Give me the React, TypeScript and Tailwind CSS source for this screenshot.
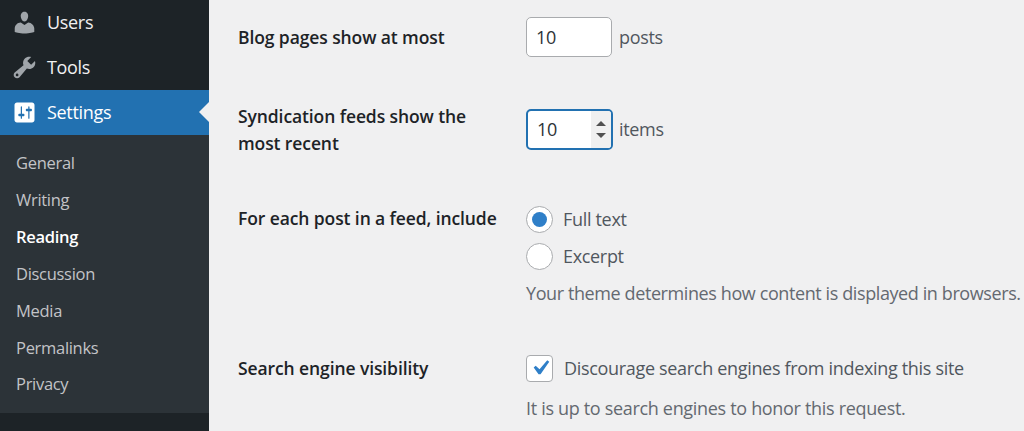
function UserIcon() {
  return (
    <div className="w-[24px] h-[24px] flex items-center justify-center">
      <svg viewBox="0 0 20 20" className="w-[27px] h-[27px] shrink-0 text-[#a0a5aa]" fill="currentColor">
        <path d="M10 9.25c-2.27 0-2.73-3.44-2.73-3.44C7 4.02 7.82 2 9.97 2c2.16 0 2.98 2.02 2.71 3.81 0 0-.41 3.44-2.68 3.44zm0 2.57L12.72 10c2.39 0 4.52 2.33 4.52 4.53v2.49s-3.65 1.13-7.24 1.13c-3.65 0-7.24-1.13-7.24-1.13v-2.49c0-2.25 1.94-4.48 4.47-4.48z" />
      </svg>
    </div>
  )
}

function ToolIcon() {
  return (
    <div className="w-[24px] h-[24px] flex items-center justify-center">
      <svg viewBox="0 0 20 20" className="w-[27px] h-[27px] shrink-0 text-[#a0a5aa]" fill="currentColor">
        <path d="M16.68 9.77c-1.34 1.34-3.3 1.67-4.95.99l-5.41 6.52c-.99.99-2.59.99-3.58 0s-.99-2.59 0-3.57l6.52-5.42c-.68-1.65-.35-3.61.99-4.95 1.28-1.28 3.12-1.62 4.72-1.06l-2.89 2.89 2.82 2.82 2.86-2.87c.53 1.58.18 3.39-1.08 4.65zM3.81 16.21c.4.39 1.04.39 1.43 0 .4-.4.4-1.04 0-1.43-.39-.4-1.03-.4-1.43 0-.39.39-.39 1.03 0 1.43z" />
      </svg>
    </div>
  )
}

function SettingsIcon() {
  return (
    <div className="w-[24px] h-[24px] flex items-center justify-center">
      <svg viewBox="0 0 20 20" className="w-[25px] h-[25px] shrink-0 text-white" fill="currentColor">
        <path d="M18 16V4c0-1.1-.9-2-2-2H4c-1.1 0-2 .9-2 2v12c0 1.1.9 2 2 2h12c1.1 0 2-.9 2-2zM8 11h1c.55 0 1 .45 1 1s-.45 1-1 1H8v1.5c0 .28-.22.5-.5.5s-.5-.22-.5-.5V13H6c-.55 0-1-.45-1-1s.45-1 1-1h1V5.5c0-.28.22-.5.5-.5s.5.22.5.5V11zm5-2h-1c-.55 0-1-.45-1-1s.45-1 1-1h1V5.5c0-.28.22-.5.5-.5s.5.22.5.5V7h1c.55 0 1 .45 1 1s-.45 1-1 1h-1v5.5c0 .28-.22.5-.5.5s-.5-.22-.5-.5V9z" />
      </svg>
    </div>
  )
}

const subItems = ["General", "Writing", "Reading", "Discussion", "Media", "Permalinks", "Privacy"]

function Sidebar() {
  return (
    <aside className="w-[209px] shrink-0 bg-[#1d2327] h-full">
      <div className="flex items-center gap-[11px] h-[45px] pl-[12px] text-[#f0f0f1]">
        <UserIcon />
        <span>Users</span>
      </div>
      <div className="flex items-center gap-[11px] h-[45px] pl-[12px] text-[#f0f0f1]">
        <ToolIcon />
        <span>Tools</span>
      </div>
      <div className="relative flex items-center gap-[11px] h-[45px] pl-[12px] bg-[#2271b1] text-white">
        <SettingsIcon />
        <span>Settings</span>
        <div className="absolute right-0 top-[12px] border-y-[10px] border-r-[10px] border-y-transparent border-r-[#f0f0f1]" />
      </div>
      <ul className="bg-[#2c3338] pt-[10px] pb-[10px] text-[#c3c4c7] text-[16.5px] tracking-[-0.3px]">
        {subItems.map((item) => (
          <li
            key={item}
            className={
              item === "Reading"
                ? "h-[36.9px] pl-[16px] flex items-center font-semibold text-white"
                : "h-[36.9px] pl-[16px] flex items-center"
            }
          >
            {item}
          </li>
        ))}
      </ul>
    </aside>
  )
}

function Label({ children }: { children: React.ReactNode }) {
  return (
    <div className="w-[288px] shrink-0 pr-[20px] font-semibold text-[#1d2327] text-[17.5px] leading-[26.5px] tracking-[-0.1px]">
      {children}
    </div>
  )
}

function NumberField({ focused }: { focused?: boolean }) {
  if (focused) {
    return (
      <div className="w-[87px] h-[41px] bg-white rounded-[5px] border-2 border-[#2271b1] flex items-center justify-between pl-[9px] text-[#2c3338]">
        <span>10</span>
        <div className="w-[20px] h-full bg-[#f0f0f0] flex flex-col items-center justify-center gap-[7px] rounded-r-[3px]">
          <div className="border-x-[5px] border-b-[5px] border-x-transparent border-b-[#505050]" />
          <div className="border-x-[5px] border-t-[5px] border-x-transparent border-t-[#505050]" />
        </div>
      </div>
    )
  }
  return (
    <div className="w-[86px] h-[40px] bg-white rounded-[5px] border border-[#a9abae] flex items-center pl-[9px] text-[#2c3338]">
      10
    </div>
  )
}

function Radio({ checked, label }: { checked?: boolean; label: string }) {
  return (
    <div className="flex items-center gap-[10px] h-[37px]">
      <div className="w-[27px] h-[27px] rounded-full bg-white border border-[#a9abae] flex items-center justify-center">
        {checked && <div className="w-[15px] h-[15px] rounded-full bg-[#2f7fc8]" />}
      </div>
      <span className="text-[#50575e]">{label}</span>
    </div>
  )
}

export default function App() {
  return (
    <div className="flex w-[1024px] h-[431px] overflow-hidden bg-[#f0f0f1] text-[18px] font-['Open_Sans','Liberation_Sans',sans-serif] tracking-[-0.32px]">
      <Sidebar />
      <main className="flex-1 pl-[29px] pt-[17px] text-[#50575e] whitespace-nowrap">
        <section className="flex items-center h-[40px]">
          <Label>Blog pages show at most</Label>
          <NumberField />
          <span className="ml-[7px]">posts</span>
        </section>
        <section className="flex items-center h-[53px] mt-[46px]">
          <Label>
            Syndication feeds show the
            <br />
            most recent
          </Label>
          <NumberField focused />
          <span className="ml-[6px]">items</span>
        </section>
        <section className="flex mt-[50px]">
          <Label>
            <div className="mt-[-1px]">For each post in a feed, include</div>
          </Label>
          <div className="mt-[-5px]">
            <Radio checked label="Full text" />
            <Radio label="Excerpt" />
            <p className="text-[#646970] mt-[5px] leading-[26px] tracking-[-0.4px]">
              Your theme determines how content is displayed in browsers.
            </p>
          </div>
        </section>
        <section className="flex mt-[49px]">
          <Label>Search engine visibility</Label>
          <div>
            <div className="flex items-center gap-[11px] h-[26px]">
              <div className="w-[27px] h-[27px] rounded-[4px] bg-white border border-[#a9abae] flex items-center justify-center">
                <svg viewBox="0 0 20 20" className="w-[30px] h-[30px] shrink-0" fill="#2f7fc8">
                  <path d="M14.83 4.89l1.34.94-5.81 8.38H9.02L5.78 9.67l1.34-1.25 2.57 2.4z" />
                </svg>
              </div>
              <span>Discourage search engines from indexing this site</span>
            </div>
            <p className="text-[#646970] mt-[14px] leading-[26px]">It is up to search engines to honor this request.</p>
          </div>
        </section>
      </main>
    </div>
  )
}
